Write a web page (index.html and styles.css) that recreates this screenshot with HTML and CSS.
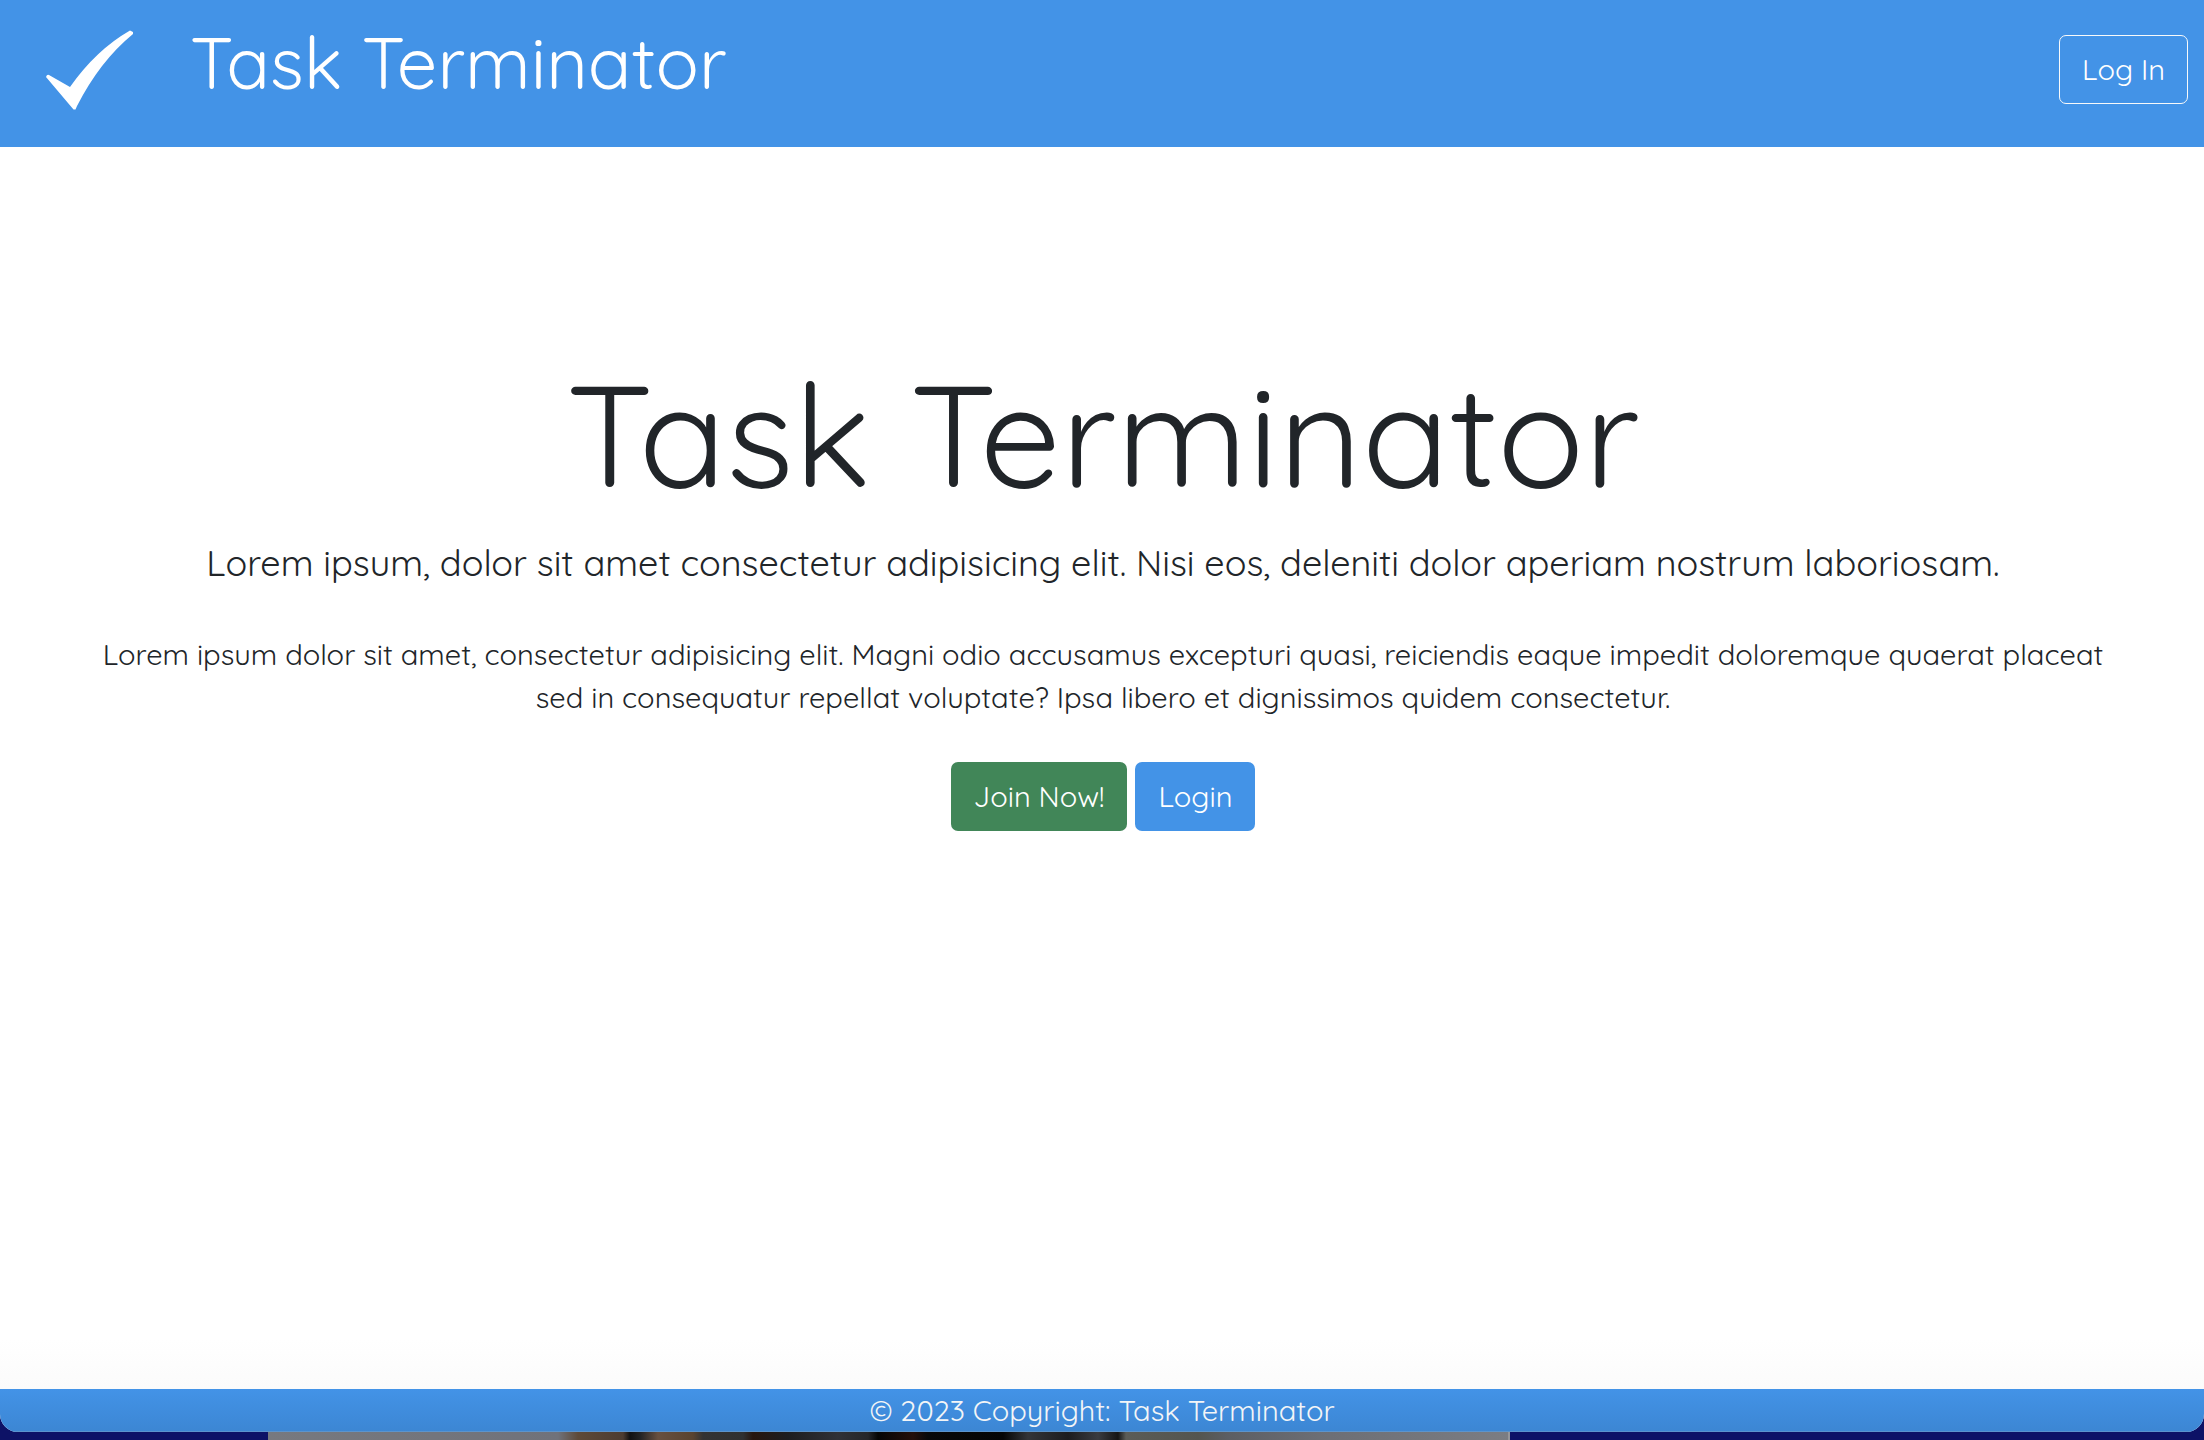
FILE: index.html
```html
<!DOCTYPE html>
<html lang="en">
<head>
  <meta charset="utf-8">
  <meta name="viewport" content="width=device-width, initial-scale=1">
  <title>Task Terminator</title>
  <link rel="stylesheet" href="styles.css">
</head>
<body>
  <div class="window">
    <header class="navbar">
      <a class="brand" href="#">
        <svg class="brand-icon" viewBox="0 0 88 80" aria-hidden="true">
          <path d="M0 47 Q1 44 3 45 L24 57 Q50 20 84 .5 L87 2 L87 4 Q54 31 31 76 L29.500 79.500 L27.500 79.500 Z" fill="#fff"/>
        </svg>
        <span class="brand-name">Task Terminator</span>
      </a>
      <button class="btn btn-outline" type="button">Log In</button>
    </header>
    <main class="hero">
      <h1 class="hero-title">Task Terminator</h1>
      <p class="hero-lead">Lorem ipsum, dolor sit amet consectetur adipisicing elit. Nisi eos, deleniti dolor aperiam nostrum laboriosam.</p>
      <p class="hero-text">Lorem ipsum dolor sit amet, consectetur adipisicing elit. Magni odio accusamus excepturi quasi, reiciendis eaque impedit doloremque quaerat placeat sed in consequatur repellat voluptate? Ipsa libero et dignissimos quidem consectetur.</p>
      <div class="hero-actions">
        <button class="btn btn-success" type="button">Join Now!</button>
        <button class="btn btn-primary" type="button">Login</button>
      </div>
    </main>
    <footer class="footer">© 2023 Copyright: Task Terminator</footer>
  </div>
  <div class="desktop"><div class="photo"></div></div>
</body>
</html>
```
FILE: styles.css
```css
* { box-sizing: border-box; }

body {
  margin: 0;
  min-height: 100vh;
  display: flex;
  flex-direction: column;
  background: #0d1266;
  color: #212529;
  font-family: Quicksand, Lato, sans-serif;
  font-size: 29px;
  line-height: 43px;
}

.window {
  flex: 1;
  display: flex;
  flex-direction: column;
  overflow: hidden;
  background: #fff;
  border-radius: 0 0 18px 18px;
}

.navbar {
  display: flex;
  justify-content: space-between;
  align-items: flex-start;
  padding: 30px 16px 37px 46px;
  background: #4393e7;
}

.brand {
  display: flex;
  gap: 56px;
  color: #fff;
  text-decoration: none;
}

.brand-icon { width: 88px; height: 80px; }

.brand-name { font-size: 72px; line-height: 64px; }

.btn {
  height: 69px;
  padding: 0 22px;
  border: 1px solid transparent;
  border-radius: 7px;
  color: #fff;
  font: inherit;
}

.btn-outline {
  margin-top: 5px;
  border-color: #f8f9fa;
  background: transparent;
}

.btn-success { background: #418658; }
.btn-primary { background: #4393e7; }

.hero {
  flex: 1;
  padding: 199px 100px 0 102px;
  text-align: center;
  background: linear-gradient(to top, #fbfbfb, #fff 50px);
}

.hero-title {
  margin: 0 0 16px;
  font-size: 144px;
  font-weight: 400;
  line-height: 174px;
}

.hero-lead {
  margin: 0 0 43px;
  font-size: 36px;
  line-height: 54px;
}

.hero-text { margin: 0 0 43px; }

.hero-actions {
  display: flex;
  justify-content: center;
  gap: 8px;
}

.footer {
  color: #f3f5f7;
  text-align: center;
  background: linear-gradient(#4393e7, #3c86d3);
  box-shadow: inset 0 -1px #5c94cc;
}

.desktop {
  height: 8px;
  padding: 0 694px 0 268px;
}

.photo {
  height: 100%;
  border-right: 2px solid #96979b;
  background: linear-gradient(to right, #77797f 0, #70727a 290px, #5e4a38 310px, #4d3c30 355px, #111 362px, #222 372px, #68503f 390px, #59432f 425px, #333 435px, #303030 475px, #27160e 485px, #1d1d1f 520px, #303136 570px, #25262a 600px, #050505 610px, #240f0a 645px, #080808 660px, #050505 735px, #333438 760px, #1c1c1f 800px, #3a3b3f 830px, #151515 850px, #5b5c56 858px, #54554f 930px, #5c5e63 960px, #6c6e74 1050px, #7b7d83 100%);
}
```
